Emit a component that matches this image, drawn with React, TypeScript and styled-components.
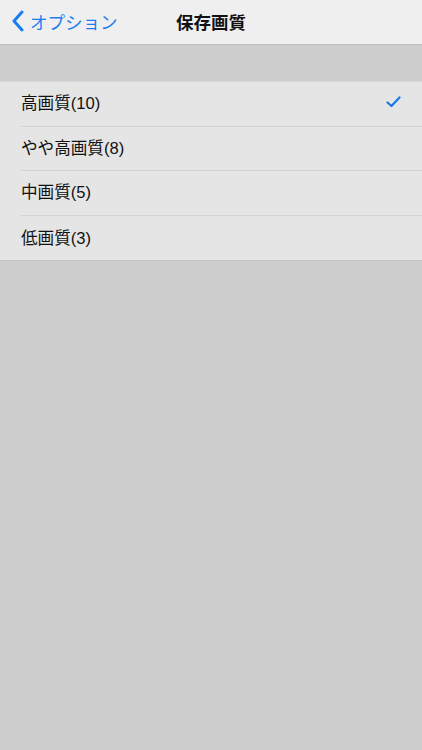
import React, { useState } from 'react';
import styled, { createGlobalStyle } from 'styled-components';

const GlobalStyle = createGlobalStyle`
  body {
    margin: 0;
    background: #cdcdcd;
    font-family: 'Liberation Sans', 'Noto Sans CJK JP', sans-serif;
  }
`;

const Page = styled.div`
  width: 422px;
  min-height: 750px;
  background: #cdcdcd;
`;

const NavBar = styled.header`
  height: 44px;
  display: grid;
  grid-template-columns: 1fr auto 1fr;
  align-items: center;
  background: #efefef;
  border-bottom: 1px solid #bdbdbd;
`;

const BackButton = styled.button`
  display: flex;
  align-items: center;
  gap: 5px;
  padding: 0 0 2px 11px;
  border: none;
  background: none;
  color: #1a7ef0;
  font-family: inherit;
  font-size: 17.5px;
  cursor: pointer;
  justify-self: start;
`;

const Title = styled.h1`
  margin: 0 0 2px;
  font-size: 17.5px;
  font-weight: bold;
  color: #111;
`;

const List = styled.ul`
  list-style: none;
  margin: 36px 0 0;
  padding: 0;
  background: #e5e5e5;
  border-top: 1px solid #d8d8d8;
  border-bottom: 1px solid #c4c4c4;
`;

const Row = styled.li`
  height: 44.6px;
  padding-left: 21px;
  display: flex;
  align-items: center;
`;

const RowInner = styled.div<{ $last: boolean }>`
  flex: 1;
  height: 100%;
  box-sizing: border-box;
  display: flex;
  align-items: center;
  justify-content: space-between;
  padding: 0 21px 3px 0;
  border-bottom: ${p => (p.$last ? 'none' : '1px solid #d3d3d3')};
  font-size: 16.6px;
  color: #111;
  cursor: pointer;
`;

const options = ['高画質(10)', 'やや高画質(8)', '中画質(5)', '低画質(3)'];

const Check = () => (
  <svg width="15" height="12" viewBox="0 0 15 12">
    <path d="M1.5 6.5 L5.5 10 L13.5 1.5" fill="none" stroke="#1a7ae6" strokeWidth="2.2" strokeLinecap="round" strokeLinejoin="round" />
  </svg>
);

const App: React.FC = () => {
  const [selected, setSelected] = useState(0);

  return (
    <>
      <GlobalStyle />
      <Page>
        <NavBar>
          <BackButton>
            <svg width="14" height="22" viewBox="0 0 14 22">
              <path d="M11 2 L3 11 L11 20" fill="none" stroke="#1a7ef0" strokeWidth="3" strokeLinecap="round" strokeLinejoin="round" />
            </svg>
            オプション
          </BackButton>
          <Title>保存画質</Title>
          <div />
        </NavBar>
        <List>
          {options.map((o, i) => (
            <Row key={o} onClick={() => setSelected(i)}>
              <RowInner $last={i === options.length - 1}>
                {o}
                {selected === i && <Check />}
              </RowInner>
            </Row>
          ))}
        </List>
      </Page>
    </>
  );
};

export default App;
